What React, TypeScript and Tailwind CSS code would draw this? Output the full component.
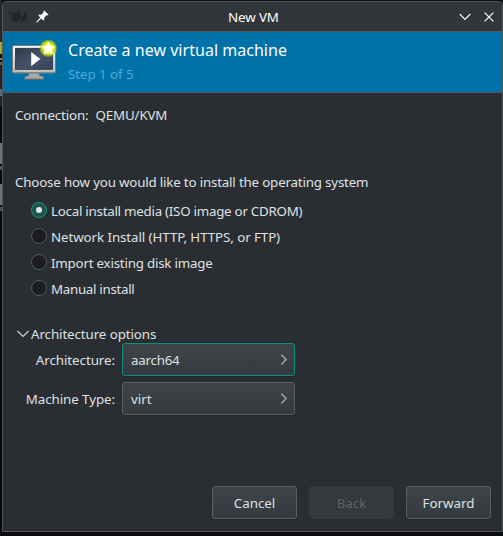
import React from "react";

const FONT = "font-['Noto_Sans','Open_Sans',sans-serif]";

function VmLogo() {
  return (
    <svg className="h-[12px] w-[20px]" viewBox="0 0 20 12" fill="none" stroke="#202427" strokeWidth="1.7">
      <path d="M0 1.5H2.4L5.6 9.6L8.6 1.5" />
      <path d="M5.4 1L8.4 9.8L11 1.5L14 9.6L17.6 1.8V11" />
      <path d="M9.4 10.6L12 4M14 10.6L18 2" />
    </svg>
  );
}

function PinIcon() {
  return (
    <svg className="h-[13px] w-[13px]" viewBox="0 0 13 13" fill="#fcfcfc">
      <path d="M8.1 .4L12.5 4.5L11.6 5.4L10.8 5.1L8.2 7.7L8.3 9.5L7.3 10.5L5.2 8.4L1 12.6L.3 12.6V11.8L4.3 7.5L2.4 5.6L3.4 4.6L5.3 4.7L7.7 2.2L7.3 1.3Z" />
    </svg>
  );
}

function MonitorIcon() {
  return (
    <svg className="h-[44px] w-[48px] shrink-0" viewBox="0 0 48 44">
      <defs>
        <linearGradient id="frame" x1="0" y1="0" x2="0" y2="1">
          <stop offset="0" stopColor="#f8f8f8" />
          <stop offset="1" stopColor="#bdbdbb" />
        </linearGradient>
        <linearGradient id="screen" x1="0" y1="0" x2="1" y2="1">
          <stop offset="0" stopColor="#303a49" />
          <stop offset=".5" stopColor="#465267" />
          <stop offset="1" stopColor="#38445a" />
        </linearGradient>
        <radialGradient id="glow">
          <stop offset=".55" stopColor="#e6f000" />
          <stop offset=".75" stopColor="#c8dc10" stopOpacity=".8" />
          <stop offset="1" stopColor="#b8d800" stopOpacity="0" />
        </radialGradient>
      </defs>
      <path d="M16.5 34H27.5V37H31L32 40.3H12.5L13.5 37H16.5Z" fill="#a8a8a8" stroke="#777" strokeWidth=".7" />
      <path d="M12.5 40.3H32" stroke="#5d6266" />
      <rect x=".5" y="6.5" width="43" height="27.5" rx="1.5" fill="url(#frame)" stroke="#797c7c" />
      <path d="M1.5 33.5H42.5" stroke="#85898c" />
      <rect x="3.5" y="9.3" width="37" height="21" fill="url(#screen)" stroke="#263142" strokeWidth=".8" />
      <path d="M19.2 13L28.3 20L19.2 27.2Z" fill="#fff" />
      <circle cx="36.3" cy="9.3" r="9.3" fill="url(#glow)" />
      <path d="M36.3 2.8L38.4 7L42.6 7.6L39.6 10.7L40.3 15.2L36.3 13.2L32.3 15.2L33 10.7L30 7.6L34.2 7Z" fill="#fffff4" stroke="#fffff4" strokeWidth=".6" />
    </svg>
  );
}

function Radio({ label, tracking, checked = false }: { label: string; tracking: string; checked?: boolean }) {
  return (
    <label className="flex h-[26px] items-center gap-1">
      <span
        className={`flex h-4 w-4 items-center justify-center rounded-full border ${
          checked ? "border-[#119681] bg-[#1d5450]" : "border-[#55585b] bg-[#1b1d20]"
        }`}
      >
        {checked && <span className="h-[6px] w-[6px] rounded-full bg-[#e4e6e6]" />}
      </span>
      <span className={`pt-[2px] ${tracking}`}>{label}</span>
    </label>
  );
}

function Field({ label, value, tracking = "", focused = false }: { label: string; value: string; tracking?: string; focused?: boolean }) {
  return (
    <div className="flex h-[33px] items-center gap-[7px]">
      <span className="w-[112px] text-right tracking-[-0.06px]">{label}</span>
      <div
        className={`flex h-[33px] w-[173px] items-center justify-between rounded-[3px] border bg-linear-to-b from-[#3e4448] to-[#343a3f] pr-[6px] pl-2 shadow-[0_1px_1px_#22262a] ${
          focused ? "border-[#07927e]" : "border-[#5c6063]"
        }`}
      >
        <span className={tracking}>{value}</span>
        <svg className="h-[12px] w-[8px]" viewBox="0 0 8 12" fill="none" stroke="#a6a9ab" strokeWidth="1.4">
          <path d="M1.3 .8L6.1 5.6L1.3 10.4" />
        </svg>
      </div>
    </div>
  );
}

function Button({ label, disabled = false }: { label: string; disabled?: boolean }) {
  return (
    <button
      disabled={disabled}
      className={`h-[33px] w-[85px] rounded-[3px] border ${
        disabled
          ? "border-[#33393d] bg-[#33393d] text-[#5c6267]"
          : "border-[#5c6063] bg-linear-to-b from-[#3e4448] to-[#343a3f] shadow-[0_1px_1px_#22262a]"
      }`}
    >
      {label}
    </button>
  );
}

function BackgroundEdge() {
  return (
    <div className="flex w-[2px] shrink-0 flex-col overflow-hidden bg-[#08090a]">
      <div className="h-[42px] shrink-0 bg-[#24282c]" />
      <div className="h-[12px] shrink-0 bg-[#a4a82c]" />
      <div className="mt-1 h-[2px] shrink-0 bg-[#777775]" />
      <div className="mt-[2px] h-[3px] shrink-0 bg-[#606060]" />
      <div className="h-[24px] shrink-0 bg-[#202327]" />
      <div className="h-[7px] shrink-0 bg-[#5a6777]" />
      <div className="h-[10px] shrink-0 bg-[#202327]" />
      <div className="mt-[37px] h-[21px] shrink-0 bg-[#71716f]" />
      <div className="mt-[2px] h-[4px] shrink-0 bg-[#505050]" />
      <div className="mt-[14px] h-[21px] shrink-0 bg-[#71716f]" />
      <div className="mt-[2px] h-[4px] shrink-0 bg-[#505050]" />
    </div>
  );
}

export default function App() {
  return (
    <div className={`flex h-[536px] w-[503px] overflow-hidden bg-[#0b0a0d] text-[13.33px] leading-[18px] text-[#dfe1e2] ${FONT}`}>
      <BackgroundEdge />
      <main className="mt-px flex h-[531px] w-[501px] flex-col overflow-hidden rounded-t-[4px] border border-[#50565b] bg-[#2a2e33]">
        <header className="flex h-[29px] shrink-0 items-center bg-[#31363b] pl-[5px] text-[#fcfcfc]">
          <VmLogo />
          <div className="ml-[8px] flex"><PinIcon /></div>
          <h1 className="ml-[179px] flex-1 tracking-[-0.1px]">New VM</h1>
          <svg className="mr-[13px] h-[8px] w-[12px]" viewBox="0 0 12 8" fill="none" stroke="#fcfcfc" strokeWidth="1.2">
            <path d="M.7 1L6 6.3L11.3 1" />
          </svg>
          <svg className="mr-[8px] h-[10px] w-[10px]" viewBox="0 0 10 10" fill="none" stroke="#fcfcfc" strokeWidth="1.2">
            <path d="M.6.6L9.4 9.4M9.4.6L.6 9.4" />
          </svg>
        </header>
        <section className="flex h-[62px] shrink-0 gap-[8px] border-y border-[#54595d] bg-[#0072aa] pt-[7px] pl-[9px]">
          <MonitorIcon />
          <div>
            <h2 className="text-[16px] leading-[22px] tracking-[0.03px] text-[#fcfcfc]">Create a new virtual machine</h2>
            <p className="mt-[4px] tracking-[-0.05px] text-[#4fa9dc]">Step 1 of 5</p>
          </div>
        </section>
        <section className="flex-1 pt-[13px]">
          <p className="pl-[12px] tracking-[-0.14px]">Connection:<span className="ml-[7px]">QEMU/KVM</span></p>
          <p className="mt-[49px] pl-[12px] tracking-[-0.18px]">Choose how you would like to install the operating system</p>
          <div className="mt-[6px] pl-[28px]">
            <Radio label="Local install media (ISO image or CDROM)" tracking="tracking-[-0.25px]" checked />
            <Radio label="Network Install (HTTP, HTTPS, or FTP)" tracking="tracking-[-0.08px]" />
            <Radio label="Import existing disk image" tracking="tracking-[-0.21px]" />
            <Radio label="Manual install" tracking="tracking-[-0.3px]" />
          </div>
          <div className="mt-[24px] flex items-center gap-[2px] pl-[14px]">
            <svg className="h-[8px] w-[12px]" viewBox="0 0 12 8" fill="none" stroke="#d5d7d8" strokeWidth="1.1">
              <path d="M.5 1L6 6.5L11.5 1" />
            </svg>
            <span className="tracking-[-0.09px]">Architecture options</span>
          </div>
          <div className="flex flex-col gap-[6px]">
            <Field label="Architecture:" value="aarch64" tracking="tracking-[-0.24px]" focused />
            <Field label="Machine Type:" value="virt" />
          </div>
        </section>
        <footer className="flex shrink-0 justify-end gap-[12px] pr-[11px] pb-[12px]">
          <Button label="Cancel" />
          <Button label="Back" disabled />
          <Button label="Forward" />
        </footer>
      </main>
    </div>
  );
}
